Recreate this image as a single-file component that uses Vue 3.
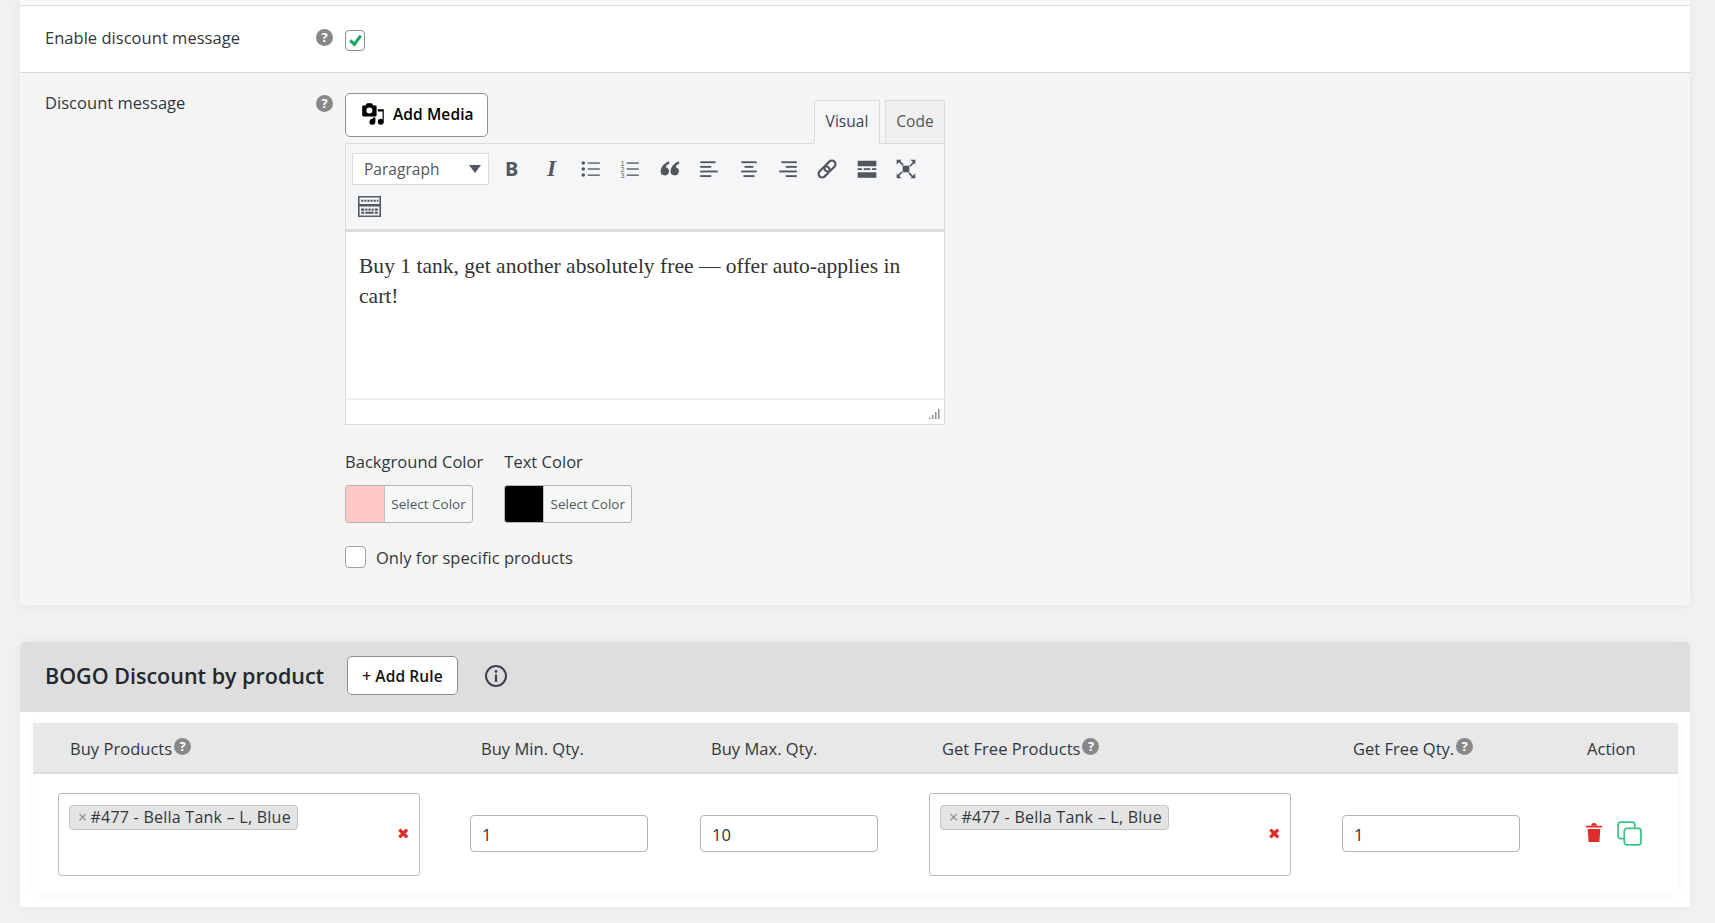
<script setup>
const toolIcons = ['ul', 'ol', 'quote', 'left', 'center', 'right', 'link', 'hr', 'full']
const alignLines = {
  left: [[2, 14], [2, 10], [2, 16], [2, 10]],
  center: [[3, 14], [6, 8], [3, 14], [5, 10]],
  right: [[4, 14], [8, 10], [2, 16], [8, 10]]
}
const columns = [
  { label: 'Buy Products', help: true },
  { label: 'Buy Min. Qty.' },
  { label: 'Buy Max. Qty.' },
  { label: 'Get Free Products', help: true },
  { label: 'Get Free Qty.', help: true },
  { label: 'Action' }
]
</script>

<template>
  <div class="page">
    <section class="card settings">
      <div class="sliver"></div>
      <div class="row row-enable">
        <span class="row-label">Enable discount message</span>
        <span class="help">?</span>
        <span class="check checked">
          <svg viewBox="0 0 20 20" width="20" height="20"><path d="M3.500 10.500l2.500-2.500 3 3 6-8 2.800 2-8.300 11.500z" fill="#1fa863" /></svg>
        </span>
      </div>
      <div class="row row-message">
        <span class="row-label">Discount message</span>
        <span class="help">?</span>
        <div class="editor-col">
          <div class="editor-head">
            <button class="media-btn">
              <svg viewBox="0 0 20 20" width="24" height="24">
                <path fill-rule="evenodd" d="M13 11V4c0-.55-.45-1-1-1h-1.670L9 1H5L3.670 3H2c-.55 0-1 .45-1 1v7c0 .55.45 1 1 1h10c.55 0 1-.45 1-1zM7 4.500a2.500 2.500 0 1 1 0 5a2.500 2.500 0 0 1 0-5z" fill="#000" />
                <path d="M14 6h5v10.500a2.500 2.500 0 1 1-2.500-2.500c.57 0 1.100.2 1.500.52V8h-4zM10 14.050V13h2v3.500a2.500 2.500 0 1 1-2-2.450z" fill="#000" />
              </svg>
              <span>Add Media</span>
            </button>
            <div class="tabs">
              <span class="tab active">Visual</span>
              <span class="tab">Code</span>
            </div>
          </div>
          <div class="toolbar">
            <div class="tool-row">
              <div class="format">
                <span>Paragraph</span>
                <i class="caret"></i>
              </div>
              <span class="tool glyph-b">B</span>
              <span class="tool glyph-i">I</span>
              <span v-for="name in toolIcons" :key="name" class="tool">
                <svg viewBox="0 0 20 20" width="22" height="22">
                  <g v-if="name === 'ul'" fill="#50575e">
                    <circle cx="3" cy="4.500" r="1.600" /><circle cx="3" cy="10" r="1.600" /><circle cx="3" cy="15.500" r="1.600" />
                    <rect x="7" y="4" width="11" height="1.200" /><rect x="7" y="9.400" width="11" height="1.200" /><rect x="7" y="15" width="11" height="1.200" />
                  </g>
                  <g v-else-if="name === 'ol'" fill="#50575e">
                    <text x="1.500" y="7" font-size="6" font-family="Liberation Sans, sans-serif">1</text>
                    <text x="1.500" y="12.500" font-size="6" font-family="Liberation Sans, sans-serif">2</text>
                    <text x="1.500" y="18" font-size="6" font-family="Liberation Sans, sans-serif">3</text>
                    <rect x="7" y="4" width="11" height="1.200" /><rect x="7" y="9.400" width="11" height="1.200" /><rect x="7" y="15" width="11" height="1.200" />
                  </g>
                  <g v-else-if="name === 'quote'" fill="#50575e">
                    <path d="M9 3C5.500 4.500 1.500 7.800 1.500 12a3.800 3.800 0 1 0 4.700-3.700C6.500 7 7.800 5.800 9.500 5z" />
                    <path d="M18 3C14.500 4.500 10.500 7.800 10.500 12a3.800 3.800 0 1 0 4.700-3.700C15.500 7 16.800 5.800 18.500 5z" />
                  </g>
                  <g v-else-if="alignLines[name]" fill="#50575e">
                    <rect v-for="(line, i) in alignLines[name]" :key="i" :x="line[0]" :y="3 + i * 4.200" :width="line[1]" height="1.700" />
                  </g>
                  <g v-else-if="name === 'link'" fill="none" stroke="#50575e" stroke-width="2" transform="rotate(-45 10 10)">
                    <rect x="0.500" y="6.700" width="11.500" height="6.600" rx="3.300" />
                    <rect x="8" y="6.700" width="11.500" height="6.600" rx="3.300" />
                  </g>
                  <g v-else-if="name === 'hr'" fill="#50575e">
                    <rect x="1.500" y="2.500" width="17" height="5" /><rect x="1.500" y="13" width="17" height="5" />
                    <rect x="1.500" y="9.300" width="4" height="1.600" /><rect x="7" y="9.300" width="6" height="1.600" /><rect x="14.500" y="9.300" width="4" height="1.600" />
                  </g>
                  <g v-else fill="#50575e">
                    <path d="M7 7h6v6H7z" />
                    <path d="M1.500 1.500h4.500L4.800 2.700 8 6 7 7 3.700 3.800 1.500 6zM18.500 1.500V6l-1.200-1.200L14 8l-1-1 3.200-3.300L14 1.500zM1.500 18.500V14l1.200 1.200L6 12l1 1-3.200 3.300L6 18.500zM18.500 18.500H14l1.200-1.200L12 14l1-1 3.300 3.200L18.500 14z" />
                  </g>
                </svg>
              </span>
            </div>
            <div class="tool-row second">
              <svg viewBox="0 0 22 20" width="23" height="21" class="keyboard">
                <path d="M0 0h22v20H0z" fill="#50575e" />
                <path d="M1.500 1.500h19v6h-19zM1.500 10h19v8.500h-19z" fill="#f5f6f7" />
                <path d="M3 3.500h2v2H3zM6 3.500h2v2H6zM9 3.500h2v2H9zM12 3.500h2v2h-2zM15 3.500h2v2h-2zM18 3.500h1.500v2H18zM3 12h3v2H3zM7 12h2v2H7zM10 12h2v2h-2zM13 12h2v2h-2zM16 12h3v2h-3zM3 15h3v2H3zM7 15h8v2H7zM16 15h3v2h-3z" fill="#50575e" />
              </svg>
            </div>
          </div>
          <div class="editor-body">Buy 1 tank, get another absolutely free — offer auto-applies in cart!</div>
          <div class="status">
            <svg viewBox="0 0 12 12" width="12" height="12"><path d="M10 1h1.500v10H10zM7 4h1.500v7H7zM4 7h1.500v4H4zM1 9.500h1.500V11H1z" fill="#8c8f94" /></svg>
          </div>
          <div class="colors">
            <div class="color-col">
              <span class="color-label">Background Color</span>
              <div class="picker">
                <span class="swatch pink"></span>
                <span class="picker-text">Select Color</span>
              </div>
            </div>
            <div class="color-col">
              <span class="color-label">Text Color</span>
              <div class="picker">
                <span class="swatch black"></span>
                <span class="picker-text">Select Color</span>
              </div>
            </div>
          </div>
          <label class="specific">
            <span class="check"></span>
            <span>Only for specific products</span>
          </label>
        </div>
      </div>
    </section>

    <section class="card bogo">
      <header class="bogo-head">
        <h2>BOGO Discount by product</h2>
        <button class="rule-btn">+ Add Rule</button>
        <svg viewBox="0 0 24 24" width="24" height="24" class="info">
          <circle cx="12" cy="12" r="10" fill="none" stroke="#3c434a" stroke-width="2" />
          <circle cx="12" cy="7.500" r="1.400" fill="#3c434a" />
          <rect x="10.900" y="10.500" width="2.200" height="7.500" fill="#3c434a" />
        </svg>
      </header>
      <div class="rules">
        <div class="rules-grid rules-head">
          <div v-for="(col, i) in columns" :key="col.label" :class="['th', 'th' + i]">
            <span>{{ col.label }}</span>
            <span v-if="col.help" class="help small">?</span>
          </div>
        </div>
        <div class="rules-grid rules-row">
          <div class="td td0">
            <div class="multi">
              <span class="tag"><b>×</b>#477 - Bella Tank – L, Blue</span>
              <span class="clear">✖</span>
            </div>
          </div>
          <div class="td td1"><div class="qty">1</div></div>
          <div class="td td2"><div class="qty">10</div></div>
          <div class="td td3">
            <div class="multi">
              <span class="tag"><b>×</b>#477 - Bella Tank – L, Blue</span>
              <span class="clear">✖</span>
            </div>
          </div>
          <div class="td td4"><div class="qty">1</div></div>
          <div class="td td5">
            <svg viewBox="0 0 20 22" width="18" height="20">
              <path d="M7 3a3 3 0 0 1 6 0h6v2H1V3zM9 3h2a1 1 0 0 0-2 0zM3 6.500h14L16 21H4z" fill="#e02b2b" />
            </svg>
            <svg viewBox="0 0 24 24" width="25" height="25" class="copy">
              <rect x="1" y="1" width="16" height="16" rx="2.500" fill="none" stroke="#3cc486" stroke-width="1.700" />
              <rect x="7" y="7" width="16" height="16" rx="2.500" fill="#fff" stroke="#3cc486" stroke-width="1.700" />
            </svg>
          </div>
        </div>
      </div>
    </section>
  </div>
</template>

<style>
html, body { margin: 0; background: #f1f1f1; }
</style>

<style scoped>
* { box-sizing: border-box; }
.page {
  width: 1715px;
  height: 923px;
  overflow: hidden;
  padding: 0 25px 0 20px;
  background: #f1f1f1;
  font-family: "Open Sans", "Noto Sans", sans-serif;
  font-size: 16.5px;
  letter-spacing: 0.03px;
  color: #32373c;
}
.card { background: #fff; box-shadow: 0 0 12px rgba(0, 0, 0, 0.05); }
.settings { height: 605px; background: #f5f5f5; }
.sliver { background: #fafafa; border-bottom: 1px solid #ddd; height: 6px; }
.row { display: flex; padding-left: 25px; }
.row-enable { height: 67px; background: #fff; border-bottom: 1px solid #d8d8d8; padding-top: 20px; }
.row-message { padding-top: 18px; }
.row-label { width: 271px; height: 24px; line-height: 24px; flex: none; }
.help {
  display: inline-flex;
  flex: none;
  align-items: center;
  justify-content: center;
  width: 17px;
  height: 17px;
  border-radius: 50%;
  background: #888;
  color: #fff;
  font: 700 13px/17px "Open Sans", sans-serif;
  letter-spacing: 0;
  margin: 3px 12px 0 0;
}
.row-message .help { margin-top: 4px; }
.check {
  display: inline-flex;
  flex: none;
  align-items: center;
  justify-content: center;
  width: 20px;
  height: 21px;
  background: #fff;
  border: 1px solid #8c8f94;
  border-radius: 4px;
}
.row-enable .check { margin-top: 4px; }
.editor-col { width: 600px; margin-top: 2px; }
.editor-head { display: flex; align-items: flex-end; justify-content: space-between; height: 50px; }
.media-btn {
  display: flex;
  align-items: center;
  gap: 8px;
  width: 143px;
  height: 44px;
  margin-bottom: 6px;
  padding: 0 0 3px 15px;
  background: #fff;
  border: 1px solid #8c8f94;
  border-radius: 5px;
  color: #000;
  font: 600 15.5px "Open Sans", sans-serif;
  letter-spacing: 0.1px;
}
.tabs { display: flex; gap: 5px; margin-bottom: -1px; position: relative; }
.tab {
  width: 60px;
  height: 44px;
  line-height: 40px;
  text-align: center;
  font-size: 15.5px;
  color: #50575e;
  background: #f0f0f1;
  border: 1px solid #dcdcde;
}
.tab.active { width: 66px; background: #f5f6f7; border-bottom-color: #f5f6f7; color: #3c434a; }
.toolbar {
  height: 89px;
  padding: 8px 0 0 6px;
  background: #f5f6f7;
  border: 1px solid #dcdcde;
  border-bottom: 3px solid #dcdcde;
}
.tool-row { display: flex; align-items: center; height: 33px; }
.tool-row.second { margin-top: 5px; height: 33px; }
.keyboard { margin-left: 6px; }
.format {
  display: flex;
  align-items: center;
  justify-content: space-between;
  width: 137px;
  height: 32px;
  margin-right: 3px;
  padding: 0 7px 0 11px;
  background: #fff;
  border: 1px solid #dcdcde;
  color: #50575e;
  font-size: 15.5px;
}
.caret { border: 6px solid transparent; border-top: 8px solid #50575e; border-bottom: 0; }
.tool {
  display: flex;
  align-items: center;
  justify-content: center;
  width: 39.4px;
  height: 32px;
  flex: none;
  color: #50575e;
}
.glyph-b { font: 700 20px "Noto Sans", sans-serif; }
.glyph-i { width: 40px; font: italic 700 23px "Liberation Serif", serif; }
.editor-body {
  height: 166px;
  padding: 19px 30px 0 13px;
  background: #fff;
  border-left: 1px solid #dcdcde;
  border-right: 1px solid #dcdcde;
  font: 21.5px/30px "Liberation Serif", serif;
  letter-spacing: 0.02px;
  color: #333;
}
.status {
  display: flex;
  align-items: flex-end;
  justify-content: flex-end;
  height: 27px;
  padding: 0 4px 4px 0;
  background: #fff;
  border: 1px solid #dcdcde;
  border-top: 2px solid #eee;
}
.colors { display: flex; gap: 21px; margin-top: 25px; }
.color-col { display: flex; flex-direction: column; gap: 11px; }
.color-label { height: 24px; line-height: 24px; }
.picker {
  display: flex;
  width: 128px;
  height: 38px;
  background: #f6f7f7;
  border: 1px solid #b5b5b5;
  border-radius: 3px;
  overflow: hidden;
}
.swatch { width: 39px; border-right: 1px solid #c0c0c0; }
.pink { background: #ffc7c7; }
.black { background: #000; }
.picker-text { flex: 1; text-align: center; line-height: 36px; font-size: 13.500px; color: #50575e; letter-spacing: 0; }
.specific { display: flex; align-items: center; gap: 10px; margin-top: 22px; height: 24px; }
.specific .check { width: 21px; height: 22px; border-color: #a0a0a0; }
.bogo { height: 265px; margin-top: 37px; padding-bottom: 13px; border-radius: 5px 5px 0 0; }
.bogo-head {
  display: flex;
  align-items: center;
  height: 70px;
  padding: 0 0 3px 25px;
  background: #dedede;
  border-radius: 5px 5px 0 0;
}
h2 { margin: 0; font: 600 21.5px "Open Sans", sans-serif; letter-spacing: 0; color: #23282d; width: 302px; flex: none; }
.rule-btn {
  width: 111px;
  height: 39px;
  margin-right: 26px;
  background: #fff;
  border: 1px solid #8c8f94;
  border-radius: 5px;
  color: #111;
  font: 600 15.5px "Open Sans", sans-serif;
  letter-spacing: 0.1px;
}
.rules { margin: 11px 12px 0 13px; box-shadow: 0 0 10px rgba(0, 0, 0, 0.04); }
.rules-grid { display: grid; grid-template-columns: 437px 230px 229px 413px 228px 1fr; }
.rules-head { height: 51px; padding-top: 2px; background: #e8e8e8; border-bottom: 2px solid #ddd; }
.th { display: flex; align-items: center; gap: 2px; font-size: 16.5px; }
.th .help.small { margin: -4px 0 0 0; }
.th0 { padding-left: 37px; }
.th1, .th2 { padding-left: 11px; }
.th3 { padding-left: 13px; }
.th4 { padding-left: 11px; }
.th5 { padding-left: 17px; }
.rules-row { height: 120px; background: #fff; align-items: center; }
.td0 { padding-left: 25px; }
.td1, .td2, .td4 { padding-bottom: 2px; }
.multi {
  display: flex;
  justify-content: space-between;
  align-items: center;
  position: relative;
  width: 361.500px;
  height: 83px;
  padding: 0 9px 0 10px;
  background: #fff;
  border: 1px solid #bbb;
  border-radius: 3px;
}
.tag {
  display: block;
  align-self: flex-start;
  height: 25px;
  margin-top: 11px;
  padding: 0 6px 0 8px;
  line-height: 23px;
  background: #e4e4e4;
  border: 1px solid #c4c4c4;
  border-radius: 4px;
  font-size: 16px;
  letter-spacing: 0.25px;
  color: #32373c;
}
.tag b { margin-right: 3px; color: #888; font-weight: 400; }
.clear { color: #e02b2b; font-size: 15px; letter-spacing: 0; margin-top: -2px; }
.qty {
  width: 178px;
  height: 37px;
  padding-left: 11px;
  line-height: 37px;
  background: #fff;
  border: 1px solid #b5b5b5;
  border-radius: 4px;
  font-size: 16.5px;
  color: #2c3338;
}
.td5 { display: flex; align-items: center; gap: 14px; padding: 0 0 2px 15px; }
</style>
